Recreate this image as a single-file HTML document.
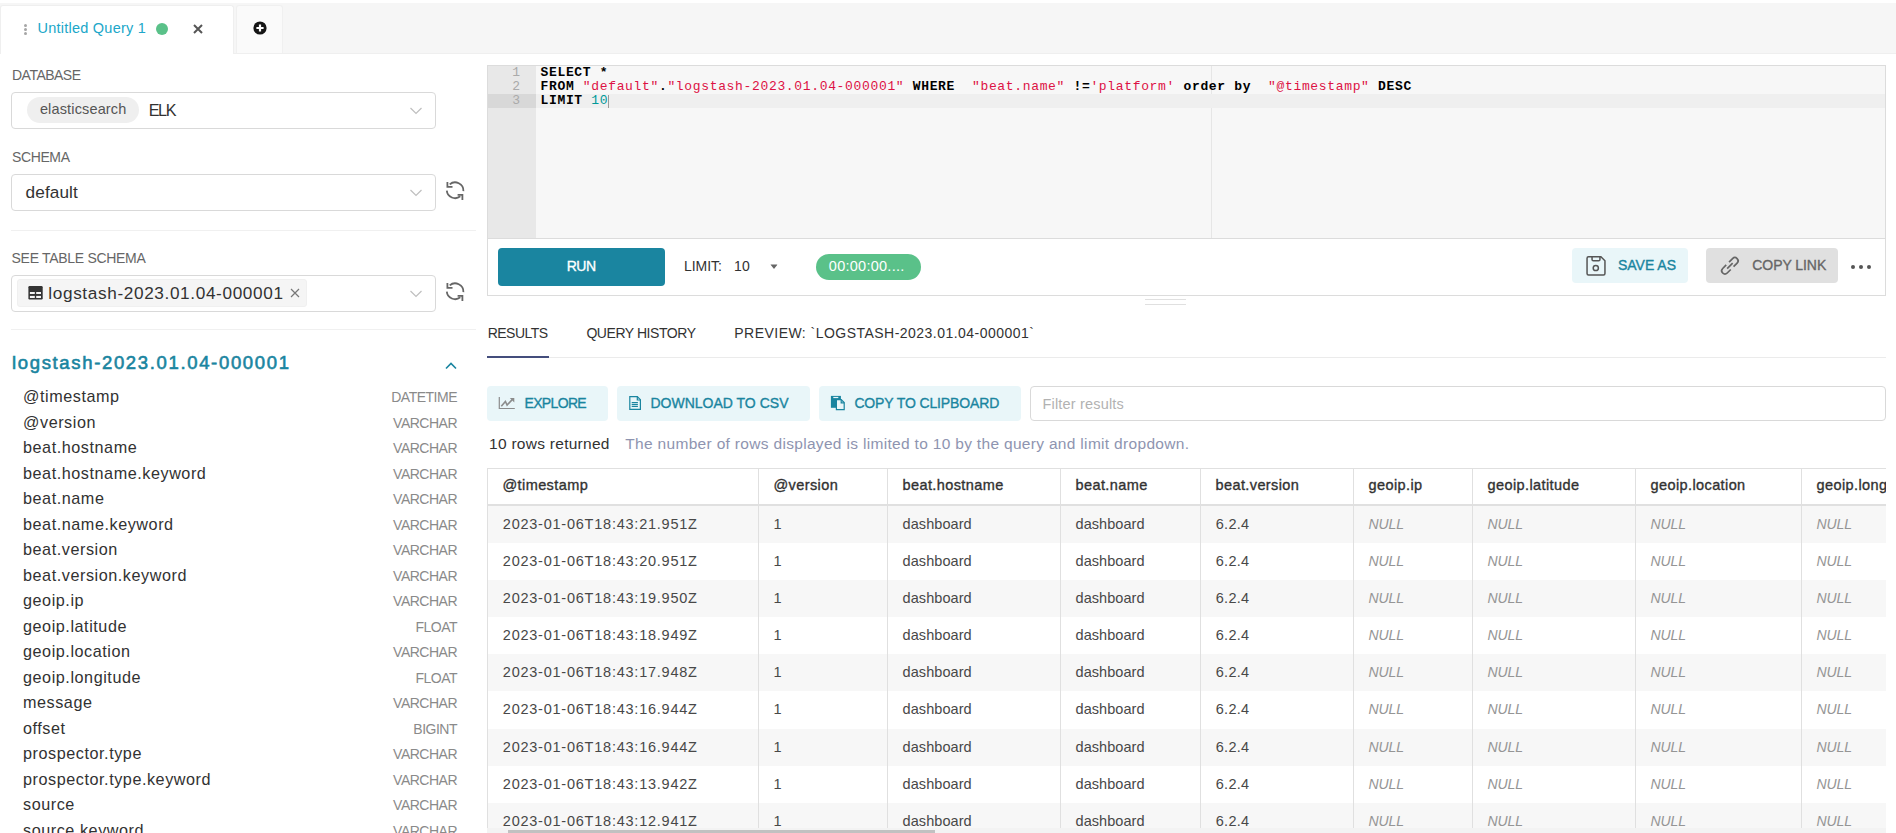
<!DOCTYPE html>
<html><head><meta charset="utf-8"><style>
html,body{margin:0;padding:0;width:1896px;height:833px;overflow:hidden;background:#fff;position:relative;}
.t{position:absolute;white-space:nowrap;line-height:1;}
</style></head><body>
<div style="position:absolute;left:0px;top:3px;width:1896px;height:50px;box-sizing:border-box;background:#f6f6f6;"></div>
<div style="position:absolute;left:0px;top:53px;width:1896px;height:1px;box-sizing:border-box;background:#efefef;"></div>
<div style="position:absolute;left:0px;top:5px;width:234px;height:49px;box-sizing:border-box;background:#fff;border:1px solid #efefef;border-bottom:none;border-radius:3px 3px 0 0;"></div>
<div style="position:absolute;left:236px;top:5px;width:47px;height:48px;box-sizing:border-box;background:#fafafa;border:1px solid #f0f0f0;border-bottom:none;border-radius:3px 3px 0 0;"></div>
<div style="position:absolute;left:23.8px;top:23.6px;width:3.3px;height:3.3px;box-sizing:border-box;background:#a6a6a6;border-radius:50%;"></div>
<div style="position:absolute;left:23.8px;top:27.8px;width:3.3px;height:3.3px;box-sizing:border-box;background:#a6a6a6;border-radius:50%;"></div>
<div style="position:absolute;left:23.8px;top:32.0px;width:3.3px;height:3.3px;box-sizing:border-box;background:#a6a6a6;border-radius:50%;"></div>
<div class="t" style="left:37.50px;top:21px;font-family:'Liberation Sans', sans-serif;font-size:14.5px;color:#20a7c9;letter-spacing:0.236px;">Untitled Query 1</div>
<div style="position:absolute;left:156px;top:23px;width:12px;height:12px;box-sizing:border-box;background:#5ac189;border-radius:50%;"></div>
<svg style="position:absolute;left:193px;top:24px;overflow:visible" width="10" height="10" viewBox="0 0 10 10"><path d="M1 1L9 9M9 1L1 9" stroke="#555" stroke-width="2"/></svg>
<svg style="position:absolute;left:252.5px;top:21px;overflow:visible" width="14" height="14" viewBox="0 0 14 14"><circle cx="7" cy="7" r="6.6" fill="#151515"/><path d="M7 3.4V10.6M3.4 7H10.6" stroke="#fff" stroke-width="2.2"/></svg>
<div class="t" style="left:12.00px;top:68px;font-family:'Liberation Sans', sans-serif;font-size:14px;color:#666;letter-spacing:-0.513px;">DATABASE</div>
<div style="position:absolute;left:11px;top:92px;width:425px;height:37px;box-sizing:border-box;border:1px solid #d9d9d9;border-radius:4px;background:#fff;"></div>
<div style="position:absolute;left:27px;top:97px;width:112px;height:26px;box-sizing:border-box;background:#efefef;border-radius:13px;"></div>
<div class="t" style="left:39.90px;top:102px;font-family:'Liberation Sans', sans-serif;font-size:14.5px;color:#555;letter-spacing:0.149px;">elasticsearch</div>
<div class="t" style="left:148.70px;top:102px;font-family:'Liberation Sans', sans-serif;font-size:16.2px;color:#323232;letter-spacing:-1.409px;">ELK</div>
<svg style="position:absolute;left:409px;top:106px;overflow:visible" width="14" height="10" viewBox="0 0 14 10"><path d="M1.5 2L7 7.5L12.5 2" fill="none" stroke="#bfbfbf" stroke-width="1.2"/></svg>
<div class="t" style="left:12.00px;top:150px;font-family:'Liberation Sans', sans-serif;font-size:14px;color:#666;letter-spacing:-0.384px;">SCHEMA</div>
<div style="position:absolute;left:11px;top:174px;width:425px;height:37px;box-sizing:border-box;border:1px solid #d9d9d9;border-radius:4px;background:#fff;"></div>
<div class="t" style="left:25.60px;top:184px;font-family:'Liberation Sans', sans-serif;font-size:17.2px;color:#323232;letter-spacing:0.102px;">default</div>
<svg style="position:absolute;left:409px;top:188px;overflow:visible" width="14" height="10" viewBox="0 0 14 10"><path d="M1.5 2L7 7.5L12.5 2" fill="none" stroke="#bfbfbf" stroke-width="1.2"/></svg>
<svg style="position:absolute;left:445px;top:181px;overflow:visible" width="20" height="20" viewBox="0 0 20 20"><g fill="none" stroke="#666" stroke-width="1.8"><path d="M4.7 3.4A8.3 8.3 0 0 1 18.4 10.1"/><path d="M1.8 9.6A8.3 8.3 0 0 0 15.3 15.3"/><path d="M2.4 1.1V5.9H7.5"/><path d="M12.6 13.8H17.4V18.9"/></g></svg>
<div style="position:absolute;left:11px;top:230px;width:465px;height:1px;box-sizing:border-box;background:#f0f0f0;"></div>
<div class="t" style="left:11.60px;top:251px;font-family:'Liberation Sans', sans-serif;font-size:14px;color:#666;letter-spacing:-0.307px;">SEE TABLE SCHEMA</div>
<div style="position:absolute;left:11px;top:275px;width:425px;height:37px;box-sizing:border-box;border:1px solid #d9d9d9;border-radius:4px;background:#fff;"></div>
<div style="position:absolute;left:17px;top:279px;width:290px;height:28px;box-sizing:border-box;background:#f5f5f5;border:1px solid #f0f0f0;border-radius:3px;"></div>
<svg style="position:absolute;left:28px;top:286px;overflow:visible" width="15" height="14" viewBox="0 0 15 14"><rect x="0.4" y="0.1" width="14.3" height="13.4" rx="1.2" fill="#333"/><g fill="#f5f5f5"><rect x="1.9" y="6" width="4.9" height="2"/><rect x="8.2" y="6" width="4.8" height="2"/><rect x="1.9" y="9.9" width="4.9" height="2.1"/><rect x="8.2" y="9.9" width="4.8" height="2.1"/></g></svg>
<div class="t" style="left:48.30px;top:285px;font-family:'Liberation Sans', sans-serif;font-size:17.2px;color:#323232;letter-spacing:0.634px;">logstash-2023.01.04-000001</div>
<svg style="position:absolute;left:290px;top:288px;overflow:visible" width="10" height="10" viewBox="0 0 10 10"><path d="M1 1L9 9M9 1L1 9" stroke="#777" stroke-width="1.2"/></svg>
<svg style="position:absolute;left:409px;top:289px;overflow:visible" width="14" height="10" viewBox="0 0 14 10"><path d="M1.5 2L7 7.5L12.5 2" fill="none" stroke="#bfbfbf" stroke-width="1.2"/></svg>
<svg style="position:absolute;left:445px;top:282px;overflow:visible" width="20" height="20" viewBox="0 0 20 20"><g fill="none" stroke="#666" stroke-width="1.8"><path d="M4.7 3.4A8.3 8.3 0 0 1 18.4 10.1"/><path d="M1.8 9.6A8.3 8.3 0 0 0 15.3 15.3"/><path d="M2.4 1.1V5.9H7.5"/><path d="M12.6 13.8H17.4V18.9"/></g></svg>
<div style="position:absolute;left:11px;top:329px;width:465px;height:1px;box-sizing:border-box;background:#f0f0f0;"></div>
<div class="t" style="left:12.00px;top:354px;font-family:'Liberation Sans', sans-serif;font-size:18.5px;color:#1a85a0;-webkit-text-stroke:0.6px #1a85a0;letter-spacing:1.656px;">logstash-2023.01.04-000001</div>
<svg style="position:absolute;left:444px;top:359px;overflow:visible" width="14" height="12" viewBox="0 0 14 12"><path d="M2 9.5L7 4.5L12 9.5" fill="none" stroke="#1a85a0" stroke-width="1.6"/></svg>
<div class="t" style="left:23.00px;top:388px;font-family:'Liberation Sans', sans-serif;font-size:16.2px;color:#323232;letter-spacing:0.550px;">@timestamp</div>
<div class="t" style="right:1439.00px;top:390px;font-family:'Liberation Sans', sans-serif;font-size:14px;color:#8a8a8a;letter-spacing:-0.500px;">DATETIME</div>
<div class="t" style="left:23.00px;top:414px;font-family:'Liberation Sans', sans-serif;font-size:16.2px;color:#323232;letter-spacing:0.550px;">@version</div>
<div class="t" style="right:1439.00px;top:416px;font-family:'Liberation Sans', sans-serif;font-size:14px;color:#8a8a8a;letter-spacing:-0.500px;">VARCHAR</div>
<div class="t" style="left:23.00px;top:439px;font-family:'Liberation Sans', sans-serif;font-size:16.2px;color:#323232;letter-spacing:0.550px;">beat.hostname</div>
<div class="t" style="right:1439.00px;top:441px;font-family:'Liberation Sans', sans-serif;font-size:14px;color:#8a8a8a;letter-spacing:-0.500px;">VARCHAR</div>
<div class="t" style="left:23.00px;top:465px;font-family:'Liberation Sans', sans-serif;font-size:16.2px;color:#323232;letter-spacing:0.550px;">beat.hostname.keyword</div>
<div class="t" style="right:1439.00px;top:467px;font-family:'Liberation Sans', sans-serif;font-size:14px;color:#8a8a8a;letter-spacing:-0.500px;">VARCHAR</div>
<div class="t" style="left:23.00px;top:490px;font-family:'Liberation Sans', sans-serif;font-size:16.2px;color:#323232;letter-spacing:0.550px;">beat.name</div>
<div class="t" style="right:1439.00px;top:492px;font-family:'Liberation Sans', sans-serif;font-size:14px;color:#8a8a8a;letter-spacing:-0.500px;">VARCHAR</div>
<div class="t" style="left:23.00px;top:516px;font-family:'Liberation Sans', sans-serif;font-size:16.2px;color:#323232;letter-spacing:0.550px;">beat.name.keyword</div>
<div class="t" style="right:1439.00px;top:518px;font-family:'Liberation Sans', sans-serif;font-size:14px;color:#8a8a8a;letter-spacing:-0.500px;">VARCHAR</div>
<div class="t" style="left:23.00px;top:541px;font-family:'Liberation Sans', sans-serif;font-size:16.2px;color:#323232;letter-spacing:0.550px;">beat.version</div>
<div class="t" style="right:1439.00px;top:543px;font-family:'Liberation Sans', sans-serif;font-size:14px;color:#8a8a8a;letter-spacing:-0.500px;">VARCHAR</div>
<div class="t" style="left:23.00px;top:567px;font-family:'Liberation Sans', sans-serif;font-size:16.2px;color:#323232;letter-spacing:0.550px;">beat.version.keyword</div>
<div class="t" style="right:1439.00px;top:569px;font-family:'Liberation Sans', sans-serif;font-size:14px;color:#8a8a8a;letter-spacing:-0.500px;">VARCHAR</div>
<div class="t" style="left:23.00px;top:592px;font-family:'Liberation Sans', sans-serif;font-size:16.2px;color:#323232;letter-spacing:0.550px;">geoip.ip</div>
<div class="t" style="right:1439.00px;top:594px;font-family:'Liberation Sans', sans-serif;font-size:14px;color:#8a8a8a;letter-spacing:-0.500px;">VARCHAR</div>
<div class="t" style="left:23.00px;top:618px;font-family:'Liberation Sans', sans-serif;font-size:16.2px;color:#323232;letter-spacing:0.550px;">geoip.latitude</div>
<div class="t" style="right:1439.00px;top:620px;font-family:'Liberation Sans', sans-serif;font-size:14px;color:#8a8a8a;letter-spacing:-0.500px;">FLOAT</div>
<div class="t" style="left:23.00px;top:643px;font-family:'Liberation Sans', sans-serif;font-size:16.2px;color:#323232;letter-spacing:0.550px;">geoip.location</div>
<div class="t" style="right:1439.00px;top:645px;font-family:'Liberation Sans', sans-serif;font-size:14px;color:#8a8a8a;letter-spacing:-0.500px;">VARCHAR</div>
<div class="t" style="left:23.00px;top:669px;font-family:'Liberation Sans', sans-serif;font-size:16.2px;color:#323232;letter-spacing:0.550px;">geoip.longitude</div>
<div class="t" style="right:1439.00px;top:671px;font-family:'Liberation Sans', sans-serif;font-size:14px;color:#8a8a8a;letter-spacing:-0.500px;">FLOAT</div>
<div class="t" style="left:23.00px;top:694px;font-family:'Liberation Sans', sans-serif;font-size:16.2px;color:#323232;letter-spacing:0.550px;">message</div>
<div class="t" style="right:1439.00px;top:696px;font-family:'Liberation Sans', sans-serif;font-size:14px;color:#8a8a8a;letter-spacing:-0.500px;">VARCHAR</div>
<div class="t" style="left:23.00px;top:720px;font-family:'Liberation Sans', sans-serif;font-size:16.2px;color:#323232;letter-spacing:0.550px;">offset</div>
<div class="t" style="right:1439.00px;top:722px;font-family:'Liberation Sans', sans-serif;font-size:14px;color:#8a8a8a;letter-spacing:-0.500px;">BIGINT</div>
<div class="t" style="left:23.00px;top:745px;font-family:'Liberation Sans', sans-serif;font-size:16.2px;color:#323232;letter-spacing:0.550px;">prospector.type</div>
<div class="t" style="right:1439.00px;top:747px;font-family:'Liberation Sans', sans-serif;font-size:14px;color:#8a8a8a;letter-spacing:-0.500px;">VARCHAR</div>
<div class="t" style="left:23.00px;top:771px;font-family:'Liberation Sans', sans-serif;font-size:16.2px;color:#323232;letter-spacing:0.550px;">prospector.type.keyword</div>
<div class="t" style="right:1439.00px;top:773px;font-family:'Liberation Sans', sans-serif;font-size:14px;color:#8a8a8a;letter-spacing:-0.500px;">VARCHAR</div>
<div class="t" style="left:23.00px;top:796px;font-family:'Liberation Sans', sans-serif;font-size:16.2px;color:#323232;letter-spacing:0.550px;">source</div>
<div class="t" style="right:1439.00px;top:798px;font-family:'Liberation Sans', sans-serif;font-size:14px;color:#8a8a8a;letter-spacing:-0.500px;">VARCHAR</div>
<div class="t" style="left:23.00px;top:822px;font-family:'Liberation Sans', sans-serif;font-size:16.2px;color:#323232;letter-spacing:0.550px;">source.keyword</div>
<div class="t" style="right:1439.00px;top:824px;font-family:'Liberation Sans', sans-serif;font-size:14px;color:#8a8a8a;letter-spacing:-0.500px;">VARCHAR</div>
<div style="position:absolute;left:487px;top:65px;width:1399px;height:231px;box-sizing:border-box;border:1px solid #dcdcdc;background:#fff;"></div>
<div style="position:absolute;left:488px;top:66px;width:1397px;height:172px;box-sizing:border-box;background:#f7f7f7;"></div>
<div style="position:absolute;left:488px;top:66px;width:48px;height:172px;box-sizing:border-box;background:#e8e8e8;"></div>
<div style="position:absolute;left:488px;top:94px;width:48px;height:14px;box-sizing:border-box;background:#d8d8d8;"></div>
<div style="position:absolute;left:1211px;top:66px;width:1px;height:172px;box-sizing:border-box;background:#e6e6e6;"></div>
<div style="position:absolute;left:536px;top:94px;width:1349px;height:14px;box-sizing:border-box;background:#efefef;"></div>
<div style="position:absolute;left:488px;top:238px;width:1397px;height:1px;box-sizing:border-box;background:#dcdcdc;"></div>
<div class="t" style="right:1376.00px;top:66px;font-family:'Liberation Mono', monospace;font-size:13px;color:#aaa;">1</div>
<div class="t" style="right:1376.00px;top:80px;font-family:'Liberation Mono', monospace;font-size:13px;color:#aaa;">2</div>
<div class="t" style="right:1376.00px;top:94px;font-family:'Liberation Mono', monospace;font-size:13px;color:#aaa;">3</div>
<div class="t" style="left:540.50px;top:66px;font-family:'Liberation Mono', monospace;font-size:13px;color:#000;font-weight:bold;letter-spacing:0.660px;">SELECT&nbsp;*</div>
<div class="t" style="left:540.50px;top:80px;font-family:'Liberation Mono', monospace;font-size:13px;color:#000;font-weight:bold;letter-spacing:0.660px;">FROM&nbsp;</div>
<div class="t" style="left:582.80px;top:80px;font-family:'Liberation Mono', monospace;font-size:13px;color:#d14;letter-spacing:0.660px;">&quot;default&quot;</div>
<div class="t" style="left:658.94px;top:80px;font-family:'Liberation Mono', monospace;font-size:13px;color:#000;font-weight:bold;letter-spacing:0.660px;">.</div>
<div class="t" style="left:667.40px;top:80px;font-family:'Liberation Mono', monospace;font-size:13px;color:#d14;letter-spacing:0.660px;">&quot;logstash-2023.01.04-000001&quot;</div>
<div class="t" style="left:904.28px;top:80px;font-family:'Liberation Mono', monospace;font-size:13px;color:#000;font-weight:bold;letter-spacing:0.660px;">&nbsp;WHERE&nbsp;&nbsp;</div>
<div class="t" style="left:971.96px;top:80px;font-family:'Liberation Mono', monospace;font-size:13px;color:#d14;letter-spacing:0.660px;">&quot;beat.name&quot;</div>
<div class="t" style="left:1065.02px;top:80px;font-family:'Liberation Mono', monospace;font-size:13px;color:#000;font-weight:bold;letter-spacing:0.660px;">&nbsp;!=</div>
<div class="t" style="left:1090.40px;top:80px;font-family:'Liberation Mono', monospace;font-size:13px;color:#d14;letter-spacing:0.660px;">&#x27;platform&#x27;</div>
<div class="t" style="left:1175.00px;top:80px;font-family:'Liberation Mono', monospace;font-size:13px;color:#000;font-weight:bold;letter-spacing:0.660px;">&nbsp;order&nbsp;by&nbsp;&nbsp;</div>
<div class="t" style="left:1268.06px;top:80px;font-family:'Liberation Mono', monospace;font-size:13px;color:#d14;letter-spacing:0.660px;">&quot;@timestamp&quot;</div>
<div class="t" style="left:1369.58px;top:80px;font-family:'Liberation Mono', monospace;font-size:13px;color:#000;font-weight:bold;letter-spacing:0.660px;">&nbsp;DESC</div>
<div class="t" style="left:540.50px;top:94px;font-family:'Liberation Mono', monospace;font-size:13px;color:#000;font-weight:bold;letter-spacing:0.660px;">LIMIT&nbsp;</div>
<div class="t" style="left:591.26px;top:94px;font-family:'Liberation Mono', monospace;font-size:13px;color:#099;letter-spacing:0.660px;">10</div>
<div style="position:absolute;left:608px;top:95px;width:1px;height:13px;box-sizing:border-box;background:#9a9a9a;"></div>
<div style="position:absolute;left:498px;top:248px;width:167px;height:38px;box-sizing:border-box;background:#1a85a0;border-radius:4px;"></div>
<div class="t" style="left:566.80px;top:259px;font-family:'Liberation Sans', sans-serif;font-size:14px;color:#fff;-webkit-text-stroke:0.35px #fff;letter-spacing:-0.555px;">RUN</div>
<div class="t" style="left:684.00px;top:259px;font-family:'Liberation Sans', sans-serif;font-size:14px;color:#323232;letter-spacing:-0.030px;">LIMIT:</div>
<div class="t" style="left:734.00px;top:259px;font-family:'Liberation Sans', sans-serif;font-size:14px;color:#323232;letter-spacing:0.260px;">10</div>
<svg style="position:absolute;left:770px;top:264px;overflow:visible" width="8" height="6" viewBox="0 0 8 6"><path d="M0.5 1Q0.5 0.5 1 0.5H7Q7.5 0.5 7.2 1L4.4 4.6Q4 5 3.6 4.6L0.8 1Z" fill="#666"/></svg>
<div style="position:absolute;left:816px;top:254px;width:105px;height:26px;box-sizing:border-box;background:#5ac189;border-radius:13px;"></div>
<div class="t" style="left:828.80px;top:259px;font-family:'Liberation Sans', sans-serif;font-size:14.5px;color:#fff;letter-spacing:0.266px;">00:00:00....</div>
<div style="position:absolute;left:1572px;top:248px;width:116px;height:34.5px;box-sizing:border-box;background:#e9f6f9;border-radius:4px;"></div>
<svg style="position:absolute;left:1586px;top:256px;overflow:visible" width="20" height="20" viewBox="0 0 20 20"><g fill="none" stroke="#555" stroke-width="1.5"><path d="M1.05 2.3Q1.05 0.75 2.5 0.75H14.9L18.95 4.8V17.5Q18.95 18.95 17.5 18.95H2.5Q1.05 18.95 1.05 17.5Z"/><path d="M6.05 0.75V3.5Q6.05 4.75 7.3 4.75H12.7Q13.95 4.75 13.95 3.5V0.75"/><circle cx="9.8" cy="12" r="2.6"/></g></svg>
<div class="t" style="left:1618.00px;top:258px;font-family:'Liberation Sans', sans-serif;font-size:14px;color:#1a85a0;-webkit-text-stroke:0.35px #1a85a0;letter-spacing:-0.017px;">SAVE AS</div>
<div style="position:absolute;left:1706px;top:248px;width:132px;height:34.5px;box-sizing:border-box;background:#e0e0e0;border-radius:4px;"></div>
<svg style="position:absolute;left:1720px;top:256px;overflow:visible" width="20" height="20" viewBox="0 0 20 20"><g transform="translate(9.9 9.8) rotate(-45)" fill="none" stroke="#666" stroke-width="1.7"><path d="M2 -3.2H7A3.2 3.2 0 0 1 7 3.2H2"/><path d="M-2 -3.2H-7A3.2 3.2 0 0 0 -7 3.2H-2"/><path d="M-3.9 0H3.9"/></g></svg>
<div class="t" style="left:1752.30px;top:258px;font-family:'Liberation Sans', sans-serif;font-size:14px;color:#666;-webkit-text-stroke:0.35px #666;letter-spacing:-0.064px;">COPY LINK</div>
<div style="position:absolute;left:1850.6px;top:264.5px;width:4.3px;height:4.3px;box-sizing:border-box;background:#555;border-radius:50%;"></div>
<div style="position:absolute;left:1858.8999999999999px;top:264.5px;width:4.3px;height:4.3px;box-sizing:border-box;background:#555;border-radius:50%;"></div>
<div style="position:absolute;left:1867.1999999999998px;top:264.5px;width:4.3px;height:4.3px;box-sizing:border-box;background:#555;border-radius:50%;"></div>
<div style="position:absolute;left:1145px;top:299px;width:41px;height:1px;box-sizing:border-box;background:#e0e0e0;"></div>
<div style="position:absolute;left:1145px;top:304px;width:41px;height:1px;box-sizing:border-box;background:#e0e0e0;"></div>
<div style="position:absolute;left:487px;top:357px;width:1399px;height:1px;box-sizing:border-box;background:#ebebeb;"></div>
<div style="position:absolute;left:487px;top:356px;width:62px;height:2px;box-sizing:border-box;background:#444e7c;"></div>
<div class="t" style="left:487.70px;top:326px;font-family:'Liberation Sans', sans-serif;font-size:14px;color:#323232;letter-spacing:-0.510px;">RESULTS</div>
<div class="t" style="left:586.40px;top:326px;font-family:'Liberation Sans', sans-serif;font-size:14px;color:#323232;letter-spacing:-0.439px;">QUERY HISTORY</div>
<div class="t" style="left:734.30px;top:326px;font-family:'Liberation Sans', sans-serif;font-size:14px;color:#323232;letter-spacing:0.466px;">PREVIEW: `LOGSTASH-2023.01.04-000001`</div>
<div style="position:absolute;left:487px;top:386px;width:120.5px;height:34.5px;box-sizing:border-box;background:#e9f6f9;border-radius:4px;"></div>
<svg style="position:absolute;left:498px;top:397px;overflow:visible" width="18" height="13" viewBox="0 0 18 13"><path d="M1.3 0V11.5H16.8" fill="none" stroke="#8c8c8c" stroke-width="1.2"/><path d="M3.3 9.2L7.4 4.5L9.1 8L14.2 2.6" fill="none" stroke="#8c8c8c" stroke-width="1.6"/><path d="M11.8 0.9H16.3V5.4Z" fill="#8c8c8c"/></svg>
<div class="t" style="left:524.50px;top:396px;font-family:'Liberation Sans', sans-serif;font-size:14px;color:#1a85a0;-webkit-text-stroke:0.35px #1a85a0;letter-spacing:-0.658px;">EXPLORE</div>
<div style="position:absolute;left:617px;top:386px;width:193px;height:34.5px;box-sizing:border-box;background:#e9f6f9;border-radius:4px;"></div>
<svg style="position:absolute;left:628px;top:396px;overflow:visible" width="14" height="15" viewBox="0 0 14 15"><g fill="none" stroke="#1a85a0" stroke-width="1.2"><path d="M1.8 0.6H9.3L12.4 3.7V13.3H1.8Z"/><path d="M9.3 0.6V4H12.4"/><path d="M3.7 6.5H9.9M3.7 8.4H9.9M3.7 10.4H9.9"/></g></svg>
<div class="t" style="left:650.40px;top:396px;font-family:'Liberation Sans', sans-serif;font-size:14px;color:#1a85a0;-webkit-text-stroke:0.35px #1a85a0;letter-spacing:0.009px;">DOWNLOAD TO CSV</div>
<div style="position:absolute;left:819px;top:386px;width:201.5px;height:34.5px;box-sizing:border-box;background:#e9f6f9;border-radius:4px;"></div>
<svg style="position:absolute;left:830px;top:395px;overflow:visible" width="15" height="15" viewBox="0 0 15 15"><rect x="0.9" y="0.9" width="10" height="11.9" fill="#1a85a0"/><rect x="3.3" y="1.9" width="5" height="1.2" fill="#e9f6f9"/><path d="M6.4 4.6H11.2L14.2 7.6V14.6H6.4Z" fill="#e9f6f9" stroke="#1a85a0" stroke-width="1.2"/><path d="M11.2 4.6V7.8H14.2" fill="none" stroke="#1a85a0" stroke-width="1.2"/></svg>
<div class="t" style="left:854.40px;top:396px;font-family:'Liberation Sans', sans-serif;font-size:14px;color:#1a85a0;-webkit-text-stroke:0.35px #1a85a0;letter-spacing:-0.136px;">COPY TO CLIPBOARD</div>
<div style="position:absolute;left:1030px;top:386px;width:856px;height:35px;box-sizing:border-box;border:1px solid #d9d9d9;border-radius:4px;"></div>
<div class="t" style="left:1042.50px;top:397px;font-family:'Liberation Sans', sans-serif;font-size:14.5px;color:#b2b2b2;letter-spacing:0.181px;">Filter results</div>
<div class="t" style="left:489.00px;top:436px;font-family:'Liberation Sans', sans-serif;font-size:15.5px;color:#323232;letter-spacing:0.278px;">10 rows returned</div>
<div class="t" style="left:625.30px;top:436px;font-family:'Liberation Sans', sans-serif;font-size:15.5px;color:#8e94b0;letter-spacing:0.317px;">The number of rows displayed is limited to 10 by the query and limit dropdown.</div>
<div style="position:absolute;left:487px;top:468px;width:1399px;height:360px;overflow:hidden;">
<div style="position:absolute;left:0px;top:38.0px;width:1420px;height:37.1px;background:#f7f7f7;"></div>
<div style="position:absolute;left:0px;top:112.20000000000005px;width:1420px;height:37.1px;background:#f7f7f7;"></div>
<div style="position:absolute;left:0px;top:186.39999999999998px;width:1420px;height:37.1px;background:#f7f7f7;"></div>
<div style="position:absolute;left:0px;top:260.6px;width:1420px;height:37.1px;background:#f7f7f7;"></div>
<div style="position:absolute;left:0px;top:334.79999999999995px;width:1420px;height:37.1px;background:#f7f7f7;"></div>
<div style="position:absolute;left:0px;top:0px;width:1420px;height:1px;background:#e0e0e0;"></div>
<div style="position:absolute;left:0px;top:0px;width:1px;height:365px;background:#e0e0e0;"></div>
<div style="position:absolute;left:0px;top:36px;width:1420px;height:2px;background:#e0e0e0;"></div>
<div style="position:absolute;left:271px;top:0px;width:1px;height:365px;background:#e0e0e0;"></div>
<div style="position:absolute;left:400px;top:0px;width:1px;height:365px;background:#e0e0e0;"></div>
<div style="position:absolute;left:573px;top:0px;width:1px;height:365px;background:#e0e0e0;"></div>
<div style="position:absolute;left:713px;top:0px;width:1px;height:365px;background:#e0e0e0;"></div>
<div style="position:absolute;left:866px;top:0px;width:1px;height:365px;background:#e0e0e0;"></div>
<div style="position:absolute;left:985px;top:0px;width:1px;height:365px;background:#e0e0e0;"></div>
<div style="position:absolute;left:1148px;top:0px;width:1px;height:365px;background:#e0e0e0;"></div>
<div style="position:absolute;left:1314px;top:0px;width:1px;height:365px;background:#e0e0e0;"></div>
<div class="t" style="left:15.50px;top:10px;font-family:'Liberation Sans', sans-serif;font-size:14.5px;color:#323232;-webkit-text-stroke:0.35px #323232;letter-spacing:0.400px;">@timestamp</div>
<div class="t" style="left:286.50px;top:10px;font-family:'Liberation Sans', sans-serif;font-size:14.5px;color:#323232;-webkit-text-stroke:0.35px #323232;letter-spacing:0.400px;">@version</div>
<div class="t" style="left:415.50px;top:10px;font-family:'Liberation Sans', sans-serif;font-size:14.5px;color:#323232;-webkit-text-stroke:0.35px #323232;letter-spacing:0.400px;">beat.hostname</div>
<div class="t" style="left:588.50px;top:10px;font-family:'Liberation Sans', sans-serif;font-size:14.5px;color:#323232;-webkit-text-stroke:0.35px #323232;letter-spacing:0.400px;">beat.name</div>
<div class="t" style="left:728.50px;top:10px;font-family:'Liberation Sans', sans-serif;font-size:14.5px;color:#323232;-webkit-text-stroke:0.35px #323232;letter-spacing:0.400px;">beat.version</div>
<div class="t" style="left:881.50px;top:10px;font-family:'Liberation Sans', sans-serif;font-size:14.5px;color:#323232;-webkit-text-stroke:0.35px #323232;letter-spacing:0.400px;">geoip.ip</div>
<div class="t" style="left:1000.50px;top:10px;font-family:'Liberation Sans', sans-serif;font-size:14.5px;color:#323232;-webkit-text-stroke:0.35px #323232;letter-spacing:0.400px;">geoip.latitude</div>
<div class="t" style="left:1163.50px;top:10px;font-family:'Liberation Sans', sans-serif;font-size:14.5px;color:#323232;-webkit-text-stroke:0.35px #323232;letter-spacing:0.400px;">geoip.location</div>
<div class="t" style="left:1329.50px;top:10px;font-family:'Liberation Sans', sans-serif;font-size:14.5px;color:#323232;-webkit-text-stroke:0.35px #323232;letter-spacing:0.400px;">geoip.longitude</div>
<div class="t" style="left:15.80px;top:49px;font-family:'Liberation Sans', sans-serif;font-size:14.5px;color:#484848;letter-spacing:0.764px;">2023-01-06T18:43:21.951Z</div>
<div class="t" style="left:286.50px;top:49px;font-family:'Liberation Sans', sans-serif;font-size:14.5px;color:#484848;">1</div>
<div class="t" style="left:415.60px;top:49px;font-family:'Liberation Sans', sans-serif;font-size:14.5px;color:#484848;letter-spacing:0.061px;">dashboard</div>
<div class="t" style="left:588.50px;top:49px;font-family:'Liberation Sans', sans-serif;font-size:14.5px;color:#484848;letter-spacing:0.061px;">dashboard</div>
<div class="t" style="left:728.70px;top:49px;font-family:'Liberation Sans', sans-serif;font-size:14.5px;color:#484848;letter-spacing:0.309px;">6.2.4</div>
<div class="t" style="left:881.50px;top:49px;font-family:'Liberation Sans', sans-serif;font-size:14px;color:#959595;font-style:italic;letter-spacing:-0.090px;">NULL</div>
<div class="t" style="left:1000.50px;top:49px;font-family:'Liberation Sans', sans-serif;font-size:14px;color:#959595;font-style:italic;letter-spacing:-0.090px;">NULL</div>
<div class="t" style="left:1163.50px;top:49px;font-family:'Liberation Sans', sans-serif;font-size:14px;color:#959595;font-style:italic;letter-spacing:-0.090px;">NULL</div>
<div class="t" style="left:1329.50px;top:49px;font-family:'Liberation Sans', sans-serif;font-size:14px;color:#959595;font-style:italic;letter-spacing:-0.090px;">NULL</div>
<div class="t" style="left:15.80px;top:86px;font-family:'Liberation Sans', sans-serif;font-size:14.5px;color:#484848;letter-spacing:0.764px;">2023-01-06T18:43:20.951Z</div>
<div class="t" style="left:286.50px;top:86px;font-family:'Liberation Sans', sans-serif;font-size:14.5px;color:#484848;">1</div>
<div class="t" style="left:415.60px;top:86px;font-family:'Liberation Sans', sans-serif;font-size:14.5px;color:#484848;letter-spacing:0.061px;">dashboard</div>
<div class="t" style="left:588.50px;top:86px;font-family:'Liberation Sans', sans-serif;font-size:14.5px;color:#484848;letter-spacing:0.061px;">dashboard</div>
<div class="t" style="left:728.70px;top:86px;font-family:'Liberation Sans', sans-serif;font-size:14.5px;color:#484848;letter-spacing:0.309px;">6.2.4</div>
<div class="t" style="left:881.50px;top:86px;font-family:'Liberation Sans', sans-serif;font-size:14px;color:#959595;font-style:italic;letter-spacing:-0.090px;">NULL</div>
<div class="t" style="left:1000.50px;top:86px;font-family:'Liberation Sans', sans-serif;font-size:14px;color:#959595;font-style:italic;letter-spacing:-0.090px;">NULL</div>
<div class="t" style="left:1163.50px;top:86px;font-family:'Liberation Sans', sans-serif;font-size:14px;color:#959595;font-style:italic;letter-spacing:-0.090px;">NULL</div>
<div class="t" style="left:1329.50px;top:86px;font-family:'Liberation Sans', sans-serif;font-size:14px;color:#959595;font-style:italic;letter-spacing:-0.090px;">NULL</div>
<div class="t" style="left:15.80px;top:123px;font-family:'Liberation Sans', sans-serif;font-size:14.5px;color:#484848;letter-spacing:0.764px;">2023-01-06T18:43:19.950Z</div>
<div class="t" style="left:286.50px;top:123px;font-family:'Liberation Sans', sans-serif;font-size:14.5px;color:#484848;">1</div>
<div class="t" style="left:415.60px;top:123px;font-family:'Liberation Sans', sans-serif;font-size:14.5px;color:#484848;letter-spacing:0.061px;">dashboard</div>
<div class="t" style="left:588.50px;top:123px;font-family:'Liberation Sans', sans-serif;font-size:14.5px;color:#484848;letter-spacing:0.061px;">dashboard</div>
<div class="t" style="left:728.70px;top:123px;font-family:'Liberation Sans', sans-serif;font-size:14.5px;color:#484848;letter-spacing:0.309px;">6.2.4</div>
<div class="t" style="left:881.50px;top:123px;font-family:'Liberation Sans', sans-serif;font-size:14px;color:#959595;font-style:italic;letter-spacing:-0.090px;">NULL</div>
<div class="t" style="left:1000.50px;top:123px;font-family:'Liberation Sans', sans-serif;font-size:14px;color:#959595;font-style:italic;letter-spacing:-0.090px;">NULL</div>
<div class="t" style="left:1163.50px;top:123px;font-family:'Liberation Sans', sans-serif;font-size:14px;color:#959595;font-style:italic;letter-spacing:-0.090px;">NULL</div>
<div class="t" style="left:1329.50px;top:123px;font-family:'Liberation Sans', sans-serif;font-size:14px;color:#959595;font-style:italic;letter-spacing:-0.090px;">NULL</div>
<div class="t" style="left:15.80px;top:160px;font-family:'Liberation Sans', sans-serif;font-size:14.5px;color:#484848;letter-spacing:0.764px;">2023-01-06T18:43:18.949Z</div>
<div class="t" style="left:286.50px;top:160px;font-family:'Liberation Sans', sans-serif;font-size:14.5px;color:#484848;">1</div>
<div class="t" style="left:415.60px;top:160px;font-family:'Liberation Sans', sans-serif;font-size:14.5px;color:#484848;letter-spacing:0.061px;">dashboard</div>
<div class="t" style="left:588.50px;top:160px;font-family:'Liberation Sans', sans-serif;font-size:14.5px;color:#484848;letter-spacing:0.061px;">dashboard</div>
<div class="t" style="left:728.70px;top:160px;font-family:'Liberation Sans', sans-serif;font-size:14.5px;color:#484848;letter-spacing:0.309px;">6.2.4</div>
<div class="t" style="left:881.50px;top:160px;font-family:'Liberation Sans', sans-serif;font-size:14px;color:#959595;font-style:italic;letter-spacing:-0.090px;">NULL</div>
<div class="t" style="left:1000.50px;top:160px;font-family:'Liberation Sans', sans-serif;font-size:14px;color:#959595;font-style:italic;letter-spacing:-0.090px;">NULL</div>
<div class="t" style="left:1163.50px;top:160px;font-family:'Liberation Sans', sans-serif;font-size:14px;color:#959595;font-style:italic;letter-spacing:-0.090px;">NULL</div>
<div class="t" style="left:1329.50px;top:160px;font-family:'Liberation Sans', sans-serif;font-size:14px;color:#959595;font-style:italic;letter-spacing:-0.090px;">NULL</div>
<div class="t" style="left:15.80px;top:197px;font-family:'Liberation Sans', sans-serif;font-size:14.5px;color:#484848;letter-spacing:0.764px;">2023-01-06T18:43:17.948Z</div>
<div class="t" style="left:286.50px;top:197px;font-family:'Liberation Sans', sans-serif;font-size:14.5px;color:#484848;">1</div>
<div class="t" style="left:415.60px;top:197px;font-family:'Liberation Sans', sans-serif;font-size:14.5px;color:#484848;letter-spacing:0.061px;">dashboard</div>
<div class="t" style="left:588.50px;top:197px;font-family:'Liberation Sans', sans-serif;font-size:14.5px;color:#484848;letter-spacing:0.061px;">dashboard</div>
<div class="t" style="left:728.70px;top:197px;font-family:'Liberation Sans', sans-serif;font-size:14.5px;color:#484848;letter-spacing:0.309px;">6.2.4</div>
<div class="t" style="left:881.50px;top:197px;font-family:'Liberation Sans', sans-serif;font-size:14px;color:#959595;font-style:italic;letter-spacing:-0.090px;">NULL</div>
<div class="t" style="left:1000.50px;top:197px;font-family:'Liberation Sans', sans-serif;font-size:14px;color:#959595;font-style:italic;letter-spacing:-0.090px;">NULL</div>
<div class="t" style="left:1163.50px;top:197px;font-family:'Liberation Sans', sans-serif;font-size:14px;color:#959595;font-style:italic;letter-spacing:-0.090px;">NULL</div>
<div class="t" style="left:1329.50px;top:197px;font-family:'Liberation Sans', sans-serif;font-size:14px;color:#959595;font-style:italic;letter-spacing:-0.090px;">NULL</div>
<div class="t" style="left:15.80px;top:234px;font-family:'Liberation Sans', sans-serif;font-size:14.5px;color:#484848;letter-spacing:0.764px;">2023-01-06T18:43:16.944Z</div>
<div class="t" style="left:286.50px;top:234px;font-family:'Liberation Sans', sans-serif;font-size:14.5px;color:#484848;">1</div>
<div class="t" style="left:415.60px;top:234px;font-family:'Liberation Sans', sans-serif;font-size:14.5px;color:#484848;letter-spacing:0.061px;">dashboard</div>
<div class="t" style="left:588.50px;top:234px;font-family:'Liberation Sans', sans-serif;font-size:14.5px;color:#484848;letter-spacing:0.061px;">dashboard</div>
<div class="t" style="left:728.70px;top:234px;font-family:'Liberation Sans', sans-serif;font-size:14.5px;color:#484848;letter-spacing:0.309px;">6.2.4</div>
<div class="t" style="left:881.50px;top:234px;font-family:'Liberation Sans', sans-serif;font-size:14px;color:#959595;font-style:italic;letter-spacing:-0.090px;">NULL</div>
<div class="t" style="left:1000.50px;top:234px;font-family:'Liberation Sans', sans-serif;font-size:14px;color:#959595;font-style:italic;letter-spacing:-0.090px;">NULL</div>
<div class="t" style="left:1163.50px;top:234px;font-family:'Liberation Sans', sans-serif;font-size:14px;color:#959595;font-style:italic;letter-spacing:-0.090px;">NULL</div>
<div class="t" style="left:1329.50px;top:234px;font-family:'Liberation Sans', sans-serif;font-size:14px;color:#959595;font-style:italic;letter-spacing:-0.090px;">NULL</div>
<div class="t" style="left:15.80px;top:272px;font-family:'Liberation Sans', sans-serif;font-size:14.5px;color:#484848;letter-spacing:0.764px;">2023-01-06T18:43:16.944Z</div>
<div class="t" style="left:286.50px;top:272px;font-family:'Liberation Sans', sans-serif;font-size:14.5px;color:#484848;">1</div>
<div class="t" style="left:415.60px;top:272px;font-family:'Liberation Sans', sans-serif;font-size:14.5px;color:#484848;letter-spacing:0.061px;">dashboard</div>
<div class="t" style="left:588.50px;top:272px;font-family:'Liberation Sans', sans-serif;font-size:14.5px;color:#484848;letter-spacing:0.061px;">dashboard</div>
<div class="t" style="left:728.70px;top:272px;font-family:'Liberation Sans', sans-serif;font-size:14.5px;color:#484848;letter-spacing:0.309px;">6.2.4</div>
<div class="t" style="left:881.50px;top:272px;font-family:'Liberation Sans', sans-serif;font-size:14px;color:#959595;font-style:italic;letter-spacing:-0.090px;">NULL</div>
<div class="t" style="left:1000.50px;top:272px;font-family:'Liberation Sans', sans-serif;font-size:14px;color:#959595;font-style:italic;letter-spacing:-0.090px;">NULL</div>
<div class="t" style="left:1163.50px;top:272px;font-family:'Liberation Sans', sans-serif;font-size:14px;color:#959595;font-style:italic;letter-spacing:-0.090px;">NULL</div>
<div class="t" style="left:1329.50px;top:272px;font-family:'Liberation Sans', sans-serif;font-size:14px;color:#959595;font-style:italic;letter-spacing:-0.090px;">NULL</div>
<div class="t" style="left:15.80px;top:309px;font-family:'Liberation Sans', sans-serif;font-size:14.5px;color:#484848;letter-spacing:0.764px;">2023-01-06T18:43:13.942Z</div>
<div class="t" style="left:286.50px;top:309px;font-family:'Liberation Sans', sans-serif;font-size:14.5px;color:#484848;">1</div>
<div class="t" style="left:415.60px;top:309px;font-family:'Liberation Sans', sans-serif;font-size:14.5px;color:#484848;letter-spacing:0.061px;">dashboard</div>
<div class="t" style="left:588.50px;top:309px;font-family:'Liberation Sans', sans-serif;font-size:14.5px;color:#484848;letter-spacing:0.061px;">dashboard</div>
<div class="t" style="left:728.70px;top:309px;font-family:'Liberation Sans', sans-serif;font-size:14.5px;color:#484848;letter-spacing:0.309px;">6.2.4</div>
<div class="t" style="left:881.50px;top:309px;font-family:'Liberation Sans', sans-serif;font-size:14px;color:#959595;font-style:italic;letter-spacing:-0.090px;">NULL</div>
<div class="t" style="left:1000.50px;top:309px;font-family:'Liberation Sans', sans-serif;font-size:14px;color:#959595;font-style:italic;letter-spacing:-0.090px;">NULL</div>
<div class="t" style="left:1163.50px;top:309px;font-family:'Liberation Sans', sans-serif;font-size:14px;color:#959595;font-style:italic;letter-spacing:-0.090px;">NULL</div>
<div class="t" style="left:1329.50px;top:309px;font-family:'Liberation Sans', sans-serif;font-size:14px;color:#959595;font-style:italic;letter-spacing:-0.090px;">NULL</div>
<div class="t" style="left:15.80px;top:346px;font-family:'Liberation Sans', sans-serif;font-size:14.5px;color:#484848;letter-spacing:0.764px;">2023-01-06T18:43:12.941Z</div>
<div class="t" style="left:286.50px;top:346px;font-family:'Liberation Sans', sans-serif;font-size:14.5px;color:#484848;">1</div>
<div class="t" style="left:415.60px;top:346px;font-family:'Liberation Sans', sans-serif;font-size:14.5px;color:#484848;letter-spacing:0.061px;">dashboard</div>
<div class="t" style="left:588.50px;top:346px;font-family:'Liberation Sans', sans-serif;font-size:14.5px;color:#484848;letter-spacing:0.061px;">dashboard</div>
<div class="t" style="left:728.70px;top:346px;font-family:'Liberation Sans', sans-serif;font-size:14.5px;color:#484848;letter-spacing:0.309px;">6.2.4</div>
<div class="t" style="left:881.50px;top:346px;font-family:'Liberation Sans', sans-serif;font-size:14px;color:#959595;font-style:italic;letter-spacing:-0.090px;">NULL</div>
<div class="t" style="left:1000.50px;top:346px;font-family:'Liberation Sans', sans-serif;font-size:14px;color:#959595;font-style:italic;letter-spacing:-0.090px;">NULL</div>
<div class="t" style="left:1163.50px;top:346px;font-family:'Liberation Sans', sans-serif;font-size:14px;color:#959595;font-style:italic;letter-spacing:-0.090px;">NULL</div>
<div class="t" style="left:1329.50px;top:346px;font-family:'Liberation Sans', sans-serif;font-size:14px;color:#959595;font-style:italic;letter-spacing:-0.090px;">NULL</div>
</div>
<div style="position:absolute;left:487px;top:828px;width:1399px;height:5px;box-sizing:border-box;background:#f3f3f3;"></div>
<div style="position:absolute;left:508px;top:830px;width:427px;height:3px;box-sizing:border-box;background:#c1c1c1;"></div>
</body></html>
